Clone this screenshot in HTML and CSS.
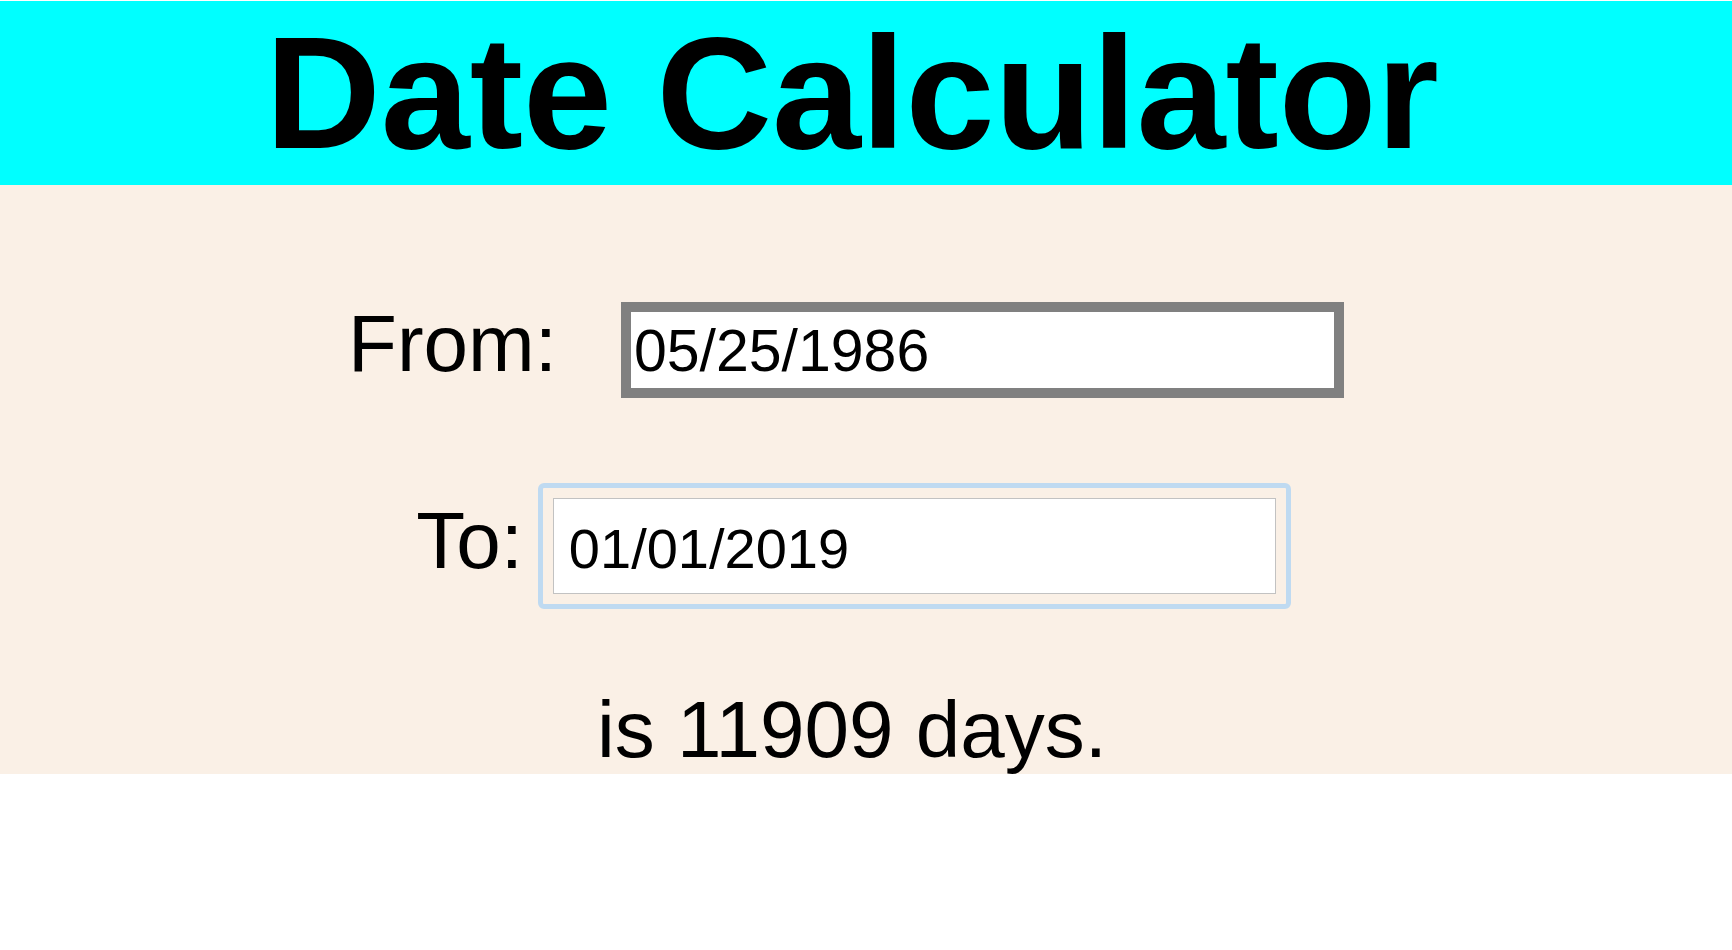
FILE: index.html
```html
<!DOCTYPE html>
<html lang="en">
<head>
<meta charset="utf-8">
<title>Date Calculator</title>
<link rel="stylesheet" href="styles.css">
</head>
<body>
<div class="page">
  <header class="masthead">
    <h1 class="title">Date Calculator</h1>
  </header>
  <main class="calc">
    <div class="row row-from">
      <label class="label label-from" for="from">From:</label>
      <input class="date-input from-input" id="from" type="text" value="05/25/1986">
    </div>
    <div class="row row-to">
      <label class="label label-to" for="to">To:</label>
      <span class="focus-ring"><input class="date-input to-input" id="to" type="text" value="01/01/2019"></span>
    </div>
    <p class="result">is 11909 days.</p>
  </main>
</div>
</body>
</html>
```

FILE: styles.css
```css
html, body {
  margin: 0;
  padding: 0;
  background: #ffffff;
}

body {
  font-family: "Liberation Sans", Arial, sans-serif;
  color: #000000;
}

.page {
  padding-top: 1px;
}

.masthead {
  background: #00ffff;
}

.title {
  margin: 0;
  padding-right: 28px;
  font-size: 160px;
  font-weight: bold;
  line-height: normal;
  text-align: center;
}

.calc {
  background: #faf0e6;
  padding: 113px 28px 0 0;
}

.row {
  display: flex;
  justify-content: center;
  align-items: baseline;
  padding-right: 12px;
}

.row-to {
  margin-top: 97px;
}

.label {
  font-size: 80px;
  line-height: normal;
}

.label-from {
  margin-right: 64px;
}

.label-to {
  margin-right: 30px;
}

.date-input {
  box-sizing: border-box;
  width: 723px;
  height: 96px;
  margin: 0;
  font-family: "Liberation Sans", Arial, sans-serif;
  color: #000000;
  background: #ffffff;
  outline: none;
}

.from-input {
  font-size: 59px;
  border: 10px solid #808080;
  padding: 3px 3px 0 3px;
}

.focus-ring {
  display: inline-flex;
  margin: -15px;
  padding: 10px;
  border: 5px solid #bfdaf1;
  border-radius: 6px;
}

.to-input {
  font-size: 56px;
  border: 1px solid #c2c2c2;
  padding: 5px 15px 0 15px;
}

.result {
  margin: 92px 0 0 0;
  font-size: 80px;
  line-height: 88px;
  text-align: center;
}
```
